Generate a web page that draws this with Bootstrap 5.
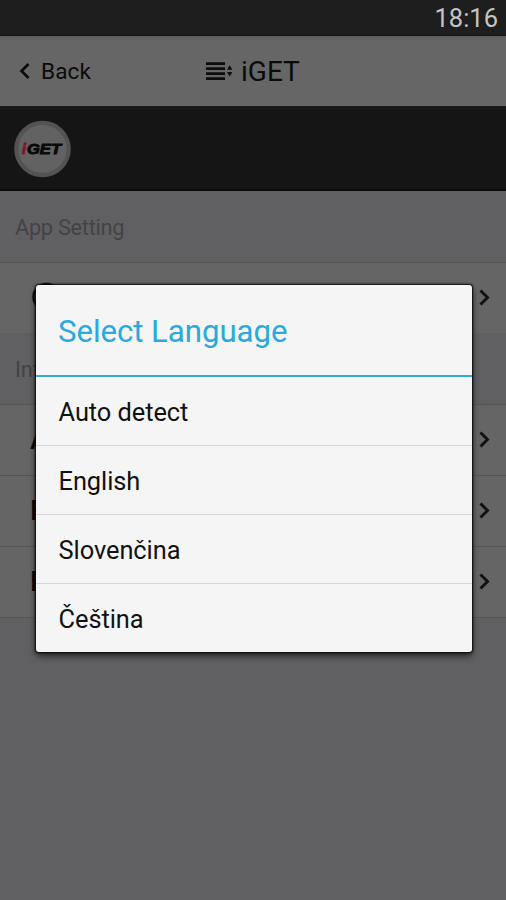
<!DOCTYPE html>
<html lang="en">
<head>
<meta charset="utf-8">
<meta name="viewport" content="width=device-width, initial-scale=1">
<title>iGET</title>
<link href="https://cdn.jsdelivr.net/npm/bootstrap@5.3.0/dist/css/bootstrap.min.css" rel="stylesheet">
<style>
body{font-family:Roboto,"Noto Sans",sans-serif;background:#606062;color:#0b0b0b;height:900px;overflow:hidden;line-height:1}
.status{height:36px;background:#1e1e1e;color:#c4c4c4;font-size:25.5px;padding:2px 8px 0 0;border-bottom:1px solid #151515}
.topbar{height:70px;background:linear-gradient(#5c5c5c,#666 4px);font-size:22.6px;padding:0 0 0 18px}
.back{width:188px;letter-spacing:.1px}
.back span{padding:2px 0 0 11px}
.title{font-size:28px;padding:2px 0 0 7px}
.brandbar{height:85px;background:#151515;border-top:1px solid #1c1818;border-bottom:2px solid #0c0c0c;padding:1px 0 0 14px}
.section{height:71px;font-size:21.8px;letter-spacing:-.3px;color:#434345;padding:2px 15px 0}
.entry{height:71px;background:#656565;border-top:1px solid #565656;padding:0 15px 0 30px;font-size:28px;font-weight:500}
.entry:last-child{border-bottom:1px solid #565656;height:72px}
.entry-globe{padding-left:32px}
.dialog{left:36px;top:285px;width:436px;height:367px;background:#f5f5f5;border-radius:3px;box-shadow:0 0 2px 1px #080808,0 4px 7px rgba(0,0,0,.65);color:#111}
.dialog-title{height:92px;border-bottom:2px solid #33abd8;color:#29a9dc;font-size:31.2px;padding:3px 22px 0;letter-spacing:-.05px}
.choice{height:69px;font-size:25.4px;padding:3px 22px 0 22.5px;border-bottom:1px solid #d7d7d7;letter-spacing:-.05px}
.choice:first-of-type{letter-spacing:-.2px}
.choice:last-child{border:0;padding-top:3px}
</style>
</head>
<body>
<div class="status d-flex align-items-center justify-content-end">18:16</div>
<header class="topbar d-flex align-items-center">
  <div class="back d-flex align-items-center">
    <svg width="12" height="18" viewBox="0 0 12 18" fill="none" stroke="#0b0b0b" stroke-width="2.6"><path d="M10.5 2 3.5 9l7 7"/></svg>
    <span>Back</span>
  </div>
  <svg width="28" height="20" viewBox="0 0 28 20" fill="#0d0d0d"><path d="M0 1.2h19v2.9H0zM0 6.2h19v2.9H0zM0 11.2h19v2.9H0zM0 16.2h19v2.9H0zM21 8.8l2.7-4.6 2.7 4.6zM21 11l2.7 4.6 2.7-4.6z"/></svg>
  <span class="title">iGET</span>
</header>
<div class="brandbar d-flex align-items-center">
  <svg width="57" height="58" viewBox="0 0 57 58">
    <circle cx="28.5" cy="29" r="28.3" fill="#535353"/><circle cx="28.5" cy="29" r="24" fill="#626262"/>
    <g font-family="Liberation Sans, sans-serif" font-weight="700" font-style="italic" font-size="14.5" stroke-width=".9">
      <text x="8" y="33.5" fill="#781820" stroke="#781820">i</text>
      <text x="13" y="33.5" textLength="34" lengthAdjust="spacingAndGlyphs" fill="#090909" stroke="#090909">GET</text>
    </g>
  </svg>
</div>
<main>
  <div class="section d-flex align-items-center">App Setting</div>
  <div class="entry entry-globe d-flex align-items-center justify-content-between">
    <svg width="30" height="32" viewBox="0 0 30 32" fill="none" stroke="#0b0b0b" stroke-width="2.4"><circle cx="14.5" cy="15" r="13"/></svg>
    <svg width="13" height="18" viewBox="0 0 13 18" fill="none" stroke="#111" stroke-width="2.9"><path d="m2.5 1.5 7 7-7 7"/></svg>
  </div>
  <div class="section d-flex align-items-center">Info</div>
  <div class="entry d-flex align-items-center justify-content-between"><span>A</span>
    <svg width="13" height="18" viewBox="0 0 13 18" fill="none" stroke="#111" stroke-width="2.9"><path d="m2.5 1.5 7 7-7 7"/></svg>
  </div>
  <div class="entry d-flex align-items-center justify-content-between"><span>F</span>
    <svg width="13" height="18" viewBox="0 0 13 18" fill="none" stroke="#111" stroke-width="2.9"><path d="m2.5 1.5 7 7-7 7"/></svg>
  </div>
  <div class="entry d-flex align-items-center justify-content-between"><span>P</span>
    <svg width="13" height="18" viewBox="0 0 13 18" fill="none" stroke="#111" stroke-width="2.9"><path d="m2.5 1.5 7 7-7 7"/></svg>
  </div>
</main>
<div class="dialog position-absolute overflow-hidden" role="dialog">
  <div class="dialog-title d-flex align-items-center">Select Language</div>
  <div class="choice d-flex align-items-center">Auto detect</div>
  <div class="choice d-flex align-items-center">English</div>
  <div class="choice d-flex align-items-center">Slovenčina</div>
  <div class="choice d-flex align-items-center">Čeština</div>
</div>
<script src="https://cdn.jsdelivr.net/npm/bootstrap@5.3.0/dist/js/bootstrap.bundle.min.js"></script>
</body>
</html>
